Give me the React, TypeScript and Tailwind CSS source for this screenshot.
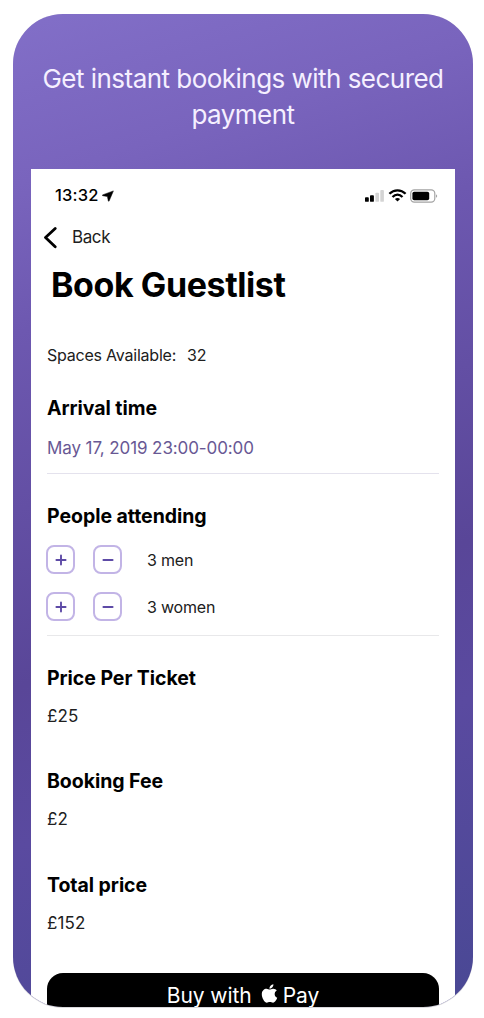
import { FaApple } from "react-icons/fa";

function Stepper({ label }: { label: string }) {
  return (
    <div className="flex h-[47px] items-center">
      <button aria-label="Add" className="-ml-px flex h-[29px] w-[29px] items-center justify-center rounded-[8px] border-2 border-[#c2b4e6]">
        <svg width="12" height="12" viewBox="0 0 12 12" stroke="#5d4aa6" strokeWidth="1.9" strokeLinecap="round"><path d="M1.4 6h9.2M6 1.4v9.2" /></svg>
      </button>
      <button aria-label="Remove" className="ml-[18px] flex h-[29px] w-[29px] items-center justify-center rounded-[8px] border-2 border-[#c2b4e6]">
        <svg width="12" height="12" viewBox="0 0 12 12" stroke="#5d4aa6" strokeWidth="1.9" strokeLinecap="round"><path d="M1.4 6h9.2" /></svg>
      </button>
      <span className="ml-[25px] text-[16px] tracking-[-0.2px]">{label}</span>
    </div>
  );
}

function SectionTitle({ children }: { children: string }) {
  return <h2 className="text-[19.5px] leading-[26px] font-bold tracking-[-0.05px] text-black">{children}</h2>;
}

function Price({ title, value }: { title: string; value: string }) {
  return (
    <section className="h-[103.3px]">
      <SectionTitle>{title}</SectionTitle>
      <p className="mt-[13px] text-[17px] leading-[24px] tracking-[0.15px]">{value}</p>
    </section>
  );
}

function StatusIcons() {
  return (
    <svg width="74" height="16" viewBox="0 0 74 16" fill="none">
      <rect x="1" y="9.2" width="3.8" height="4.6" rx="0.9" fill="#000" />
      <rect x="6" y="7.2" width="3.9" height="6.6" rx="0.9" fill="#000" />
      <rect x="11.4" y="4.7" width="3.6" height="9.1" rx="0.9" fill="#d4d4d4" />
      <rect x="16.3" y="2" width="3.6" height="11.8" rx="0.9" fill="#d4d4d4" />
      <path d="M25.4 5.8C30 1.1 37 1.1 41.6 5.8M28.5 9C31.5 6 35.5 6 38.5 9" stroke="#000" strokeWidth="2.3" />
      <path d="M30.9 11Q33.5 8.9 36.1 11L33.5 13.6Z" fill="#000" />
      <rect x="46.7" y="1.9" width="24.1" height="12.2" rx="3.6" stroke="#a3a3a3" strokeWidth="1.2" />
      <rect x="48.4" y="3.7" width="16.8" height="8.6" rx="1.8" fill="#000" />
      <path d="M72 6.2Q74.4 8 72 9.8Z" fill="#a3a3a3" />
    </svg>
  );
}

export default function App() {
  return (
    <main className="h-[1018px] w-[484px] overflow-hidden bg-white pt-[14px] pl-[13px] font-['Inter',sans-serif] text-[#202020]">
      <div className="rounded-[50px] w-[460px] bg-[#d9d8dc] pb-px">
        <div className="flex h-[993px] w-[460px] flex-col overflow-hidden rounded-[50px] bg-[linear-gradient(162deg,#826fc8_0%,#7964bd_15%,#6d58b0_28%,#594698_59%,#5a4aa0_73%,#494894_100%)]">
          <h1 className="mt-[47px] h-[108px] shrink-0 text-center text-[26px] leading-[36px] tracking-[-0.53px] text-[#f5efff]">
            Get instant bookings with secured<br />payment
          </h1>
          <div className="ml-[18px] flex w-[424px] flex-1 flex-col overflow-hidden bg-white">
            <header className="flex h-[53px] shrink-0 items-center justify-between pr-[17px] pl-[24px]">
              <div className="flex items-center gap-[4px] text-[16.5px] font-medium tracking-[0.15px] text-black">
                <span>13:32</span>
                <svg width="12" height="12" viewBox="0 0 12 12" fill="#000"><path d="M11.4.9.5 4.9Q0 5.4.7 5.7L5.4 6.5 6.3 10.9Q6.6 11.6 7.1 11Z" stroke="#000" strokeWidth=".5" strokeLinejoin="round" /></svg>
              </div>
              <StatusIcons />
            </header>
            <nav className="flex h-[32px] shrink-0 items-center pl-[12px]">
              <svg width="15" height="22" viewBox="0 0 15 22" fill="none" stroke="#000" strokeWidth="2.8" strokeLinecap="round" strokeLinejoin="round"><path d="M12.2 1.5 2.5 10.5l9.7 9.2" /></svg>
              <span className="ml-[14px] text-[17px] tracking-[-0.4px]">Back</span>
            </nav>
            <h1 className="h-[63px] shrink-0 pt-[10px] pl-[20px] text-[34px] leading-[42px] font-bold tracking-[-0.42px] text-black">Book Guestlist</h1>
            <div className="flex w-[408px] shrink-0 flex-col pl-[16px]">
              <p className="mt-[26px] mb-[28px] text-[16px] leading-[24px] tracking-[-0.22px]">Spaces Available:<span className="ml-[11px]">32</span></p>
              <SectionTitle>Arrival time</SectionTitle>
              <p className="mt-[15px] mb-[29px] h-[38px] border-b border-[#e4e2ed] text-[17px] leading-[24px] tracking-[-0.1px] text-[#685894]">May 17, 2019 23:00-00:00</p>
              <SectionTitle>People attending</SectionTitle>
              <div className="mt-[7px] h-[100px] border-b border-[#e8e8ea]">
                <Stepper label="3 men" />
                <Stepper label="3 women" />
              </div>
              <div className="mt-[29px] h-[307.5px]">
                <Price title="Price Per Ticket" value="£25" />
                <Price title="Booking Fee" value="£2" />
                <Price title="Total price" value="£152" />
              </div>
              <button className="flex h-[35px] items-start justify-center rounded-t-[16px] bg-black pt-[10px] text-[21px] leading-[25px] tracking-[-0.05px] text-white">
                <span>Buy with</span><FaApple className="ml-[7px]" size={21} /><span className="ml-[3px]">Pay</span>
              </button>
            </div>
          </div>
        </div>
      </div>
    </main>
  );
}
